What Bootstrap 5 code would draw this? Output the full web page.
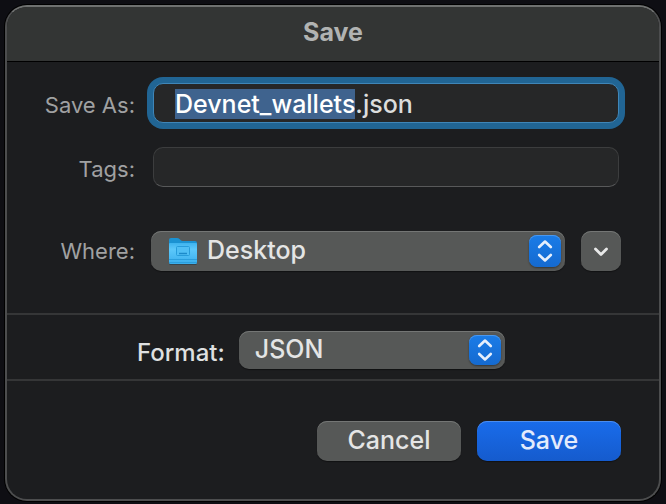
<!DOCTYPE html>
<html lang="en" data-bs-theme="dark">
<head>
<meta charset="utf-8">
<meta name="viewport" content="width=device-width, initial-scale=1">
<title>Save</title>
<link rel="stylesheet" href="https://cdn.jsdelivr.net/npm/bootstrap@5.3.0/dist/css/bootstrap.min.css">
<style>
body{background:#0e0e13;font-family:Inter,Roboto,sans-serif;font-weight:500;padding:5px 5px 3px;overflow:hidden}
.sheet{background:#1c1d1f;border:2px solid #4c4d4e;border-top-color:#6f7170;border-radius:22px;box-shadow:0 0 0 1px #000;overflow:hidden}
.sheet-title{background:#333534;border-bottom:1px solid #000;color:#b1b3b2;font-size:25px;line-height:50px;padding-bottom:4px;font-weight:700;margin:0}
.fields{padding:21px 38px 42px 0}
.field-label{flex:0 0 128px;color:#a0a1a2;font-size:22px;font-weight:400;line-height:40px;padding:2px 0 0}
.field-row{column-gap:16px;height:40px}
.tags-row{margin-top:24px}
.where-row{margin-top:44px}
.where-row .field-label{padding:0}
.text-field{height:40px;margin:0 2px;padding:2px 21px 0;font-size:25px;font-weight:500;line-height:34px;color:#dcdddd;background:#262728;border:1px solid #3c3d3e;border-bottom-color:#58595a;border-radius:10px}
.text-field:focus{color:#dcdddd;background:#262728;border-color:#3f86b8;box-shadow:0 0 0 6px #216594}
.text-field::selection{background:rgba(63,99,143,.996);color:#fff}
.pop-select{height:100%;padding:0 48px 2px 16px;font-size:25px;font-weight:500;line-height:36px;color:#e4e5e5;background:#565857;border:0;border-radius:10px;box-shadow:inset 0 1px 0 #747675,0 1px 1px #0006}
.has-folder{padding-left:56px}
.folder-icon{left:16px;top:5px}
.stepper{top:4px;right:4px;bottom:4px;width:32px;border-radius:8px;background:linear-gradient(#1a7ce8,#156ad0);box-shadow:inset 0 1px 0 #4b98ee,0 1px 2px #0006}
.push{height:40px;padding:0 0 2px;font-size:25px;font-weight:500;line-height:36px;color:#e4e5e5;background:#565857;border:0;border-radius:10px;box-shadow:inset 0 1px 0 #747675,0 1px 1px #0006}
.push:hover{color:#fff;background:#606261}
.push-wide{width:144px}
.push-square{width:40px;flex:none;padding:0}
.push-main,.push-main:hover{color:#e3ebfc;background:linear-gradient(#196ceb,#155bcd);box-shadow:inset 0 1px 0 #4b8df0,0 1px 1px #0006}
.format-row{border:solid #353637;border-width:2px 0;padding:16px 154px 10px 130px;column-gap:14px}
.format-label{color:#dfe0e0;font-size:24px;line-height:32px;padding:6px 0 0;white-space:nowrap}
.format-box{height:38px}
.actions{padding:40px 38px 38px;gap:16px}
</style>
<script defer src="https://cdn.jsdelivr.net/npm/bootstrap@5.3.0/dist/js/bootstrap.bundle.min.js"></script>
</head>
<body>
<main class="sheet">
<h1 class="sheet-title text-center">Save</h1>
<form>
  <div class="fields">
    <div class="field-row d-flex">
      <label class="field-label text-end" for="name">Save As:</label>
      <div class="flex-fill"><div class="d-flex"><input class="form-control text-field" id="name" type="text" value="Devnet_wallets.json" spellcheck="false" autocomplete="off"></div></div>
    </div>
    <div class="field-row tags-row d-flex">
      <label class="field-label text-end" for="tags">Tags:</label>
      <div class="flex-fill"><div class="d-flex"><input class="form-control text-field" id="tags" type="text"></div></div>
    </div>
    <div class="field-row where-row d-flex">
      <label class="field-label text-end" for="where">Where:</label>
      <div class="d-flex flex-fill gap-3">
        <div class="position-relative flex-fill">
          <select class="form-select pop-select has-folder" id="where"><option>Desktop</option></select>
          <svg class="folder-icon position-absolute pe-none" width="32" height="32" viewBox="0 0 32 32" aria-hidden="true">
            <defs><linearGradient id="front" x2="0" y2="1"><stop offset="0" stop-color="#3fb3ee"/><stop offset=".3" stop-color="#5cc8fa"/><stop offset="1" stop-color="#3aaeed"/></linearGradient></defs>
            <path d="M2.500 27.500h27v1.500h-27z" fill="#38444a"/>
            <path d="M2 4Q2 2 4 2h6q1.500 0 2.500 1l1 1q1 1 2.500 1H28q2 0 2 2v4H2z" fill="#1b92d2"/>
            <path d="M2 8Q2 7 3 7H29q1 0 1 1V26.500q0 1.500-1.500 1.500H3.500Q2 28 2 26.500z" fill="url(#front)"/>
            <path d="M2 23.500h28M2 26.500h28" stroke="#2b9fdd"/>
            <rect x="9.500" y="10.500" width="13" height="9" rx="1" fill="#50bff5" stroke="#279cdb"/>
            <path d="M12 17.500h8" stroke="#1c8aca" stroke-width="1.500"/>
          </svg>
          <span class="stepper position-absolute pe-none d-flex align-items-center justify-content-center">
            <svg width="16" height="24" viewBox="0 0 16 24" fill="none" stroke="#e6effc" stroke-width="2.600" stroke-linecap="round" stroke-linejoin="round" aria-hidden="true"><path d="M2.200 8 8 2.500 13.800 8M2.200 16 8 21.500 13.800 16"/></svg>
          </span>
        </div>
        <button class="btn push push-square d-flex align-items-center justify-content-center" type="button" aria-label="Show more">
          <svg width="16" height="12" viewBox="0 0 16 12" fill="none" stroke="#e8e9e9" stroke-width="2.800" stroke-linecap="round" stroke-linejoin="round" aria-hidden="true"><path d="M2.500 4 8 9.500 13.500 4"/></svg>
        </button>
      </div>
    </div>
  </div>
  <div class="format-row d-flex">
    <label class="format-label" for="format">Format:</label>
    <div class="format-box position-relative flex-fill">
      <select class="form-select pop-select" id="format"><option>JSON</option></select>
      <span class="stepper position-absolute pe-none d-flex align-items-center justify-content-center">
        <svg width="16" height="24" viewBox="0 0 16 24" fill="none" stroke="#e6effc" stroke-width="2.600" stroke-linecap="round" stroke-linejoin="round" aria-hidden="true"><path d="M2.200 8 8 2.500 13.800 8M2.200 16 8 21.500 13.800 16"/></svg>
      </span>
    </div>
  </div>
  <div class="actions d-flex justify-content-end">
    <button class="btn push push-wide" type="button">Cancel</button>
    <button class="btn push push-wide push-main" type="submit">Save</button>
  </div>
</form>
</main>
<script>
const nameField = document.getElementById('name');
nameField.focus();
nameField.setSelectionRange(0, nameField.value.lastIndexOf('.'));
</script>
</body>
</html>
